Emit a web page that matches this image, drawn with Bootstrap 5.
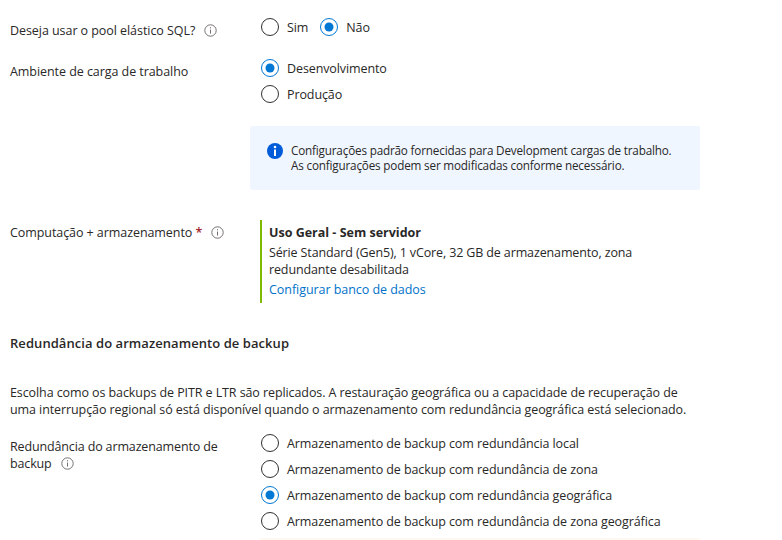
<!DOCTYPE html>
<html lang="pt-BR">
<head>
<meta charset="utf-8">
<meta name="viewport" content="width=device-width, initial-scale=1">
<title>Criar Banco de Dados SQL</title>
<link href="https://cdn.jsdelivr.net/npm/bootstrap@5.3.0/dist/css/bootstrap.min.css" rel="stylesheet">
<style>
body{font-family:"Open Sans","Noto Sans",sans-serif;font-size:12.5px;line-height:17px;letter-spacing:-.1px;color:#292827;background:#fff;overflow:hidden}
.form-page{width:782px;height:540px;padding-left:10px;overflow:hidden}
.form-page > *{flex-shrink:0}
.field-label{width:250px}
.field-row{white-space:nowrap}
.row-pool{padding-top:14px}
.row-pool .field-label{padding-top:6px;letter-spacing:-.06px}
.row-env{padding-top:15px}
.row-env .field-label{letter-spacing:-.06px}
.row-compute{padding-top:30px}
.row-compute .field-label{letter-spacing:-.07px}
.row-backup{padding-top:12px}
.row-backup .field-label{letter-spacing:-.14px}
.row-backup .opt{letter-spacing:-.09px}
.opt{height:26px;gap:7px;cursor:pointer}
.opt input{position:absolute;opacity:0;pointer-events:none}
.opt .dial{width:20px;height:20px;fill:none;stroke:#323130}
.opt .dial .dot{display:none;fill:#0078d4;stroke:none}
.opt input:checked + .dial{stroke:#0078d4}
.opt input:checked + .dial .dot{display:block}
.pool-yes{margin-right:11px}
.hint{width:13px;height:13px;stroke:#74726f;fill:none;flex:none;margin-left:9px}
.row-compute .hint{margin-top:2px;margin-left:9px}
.notice{width:450px;height:64px;margin-left:240px;margin-top:19px;padding:17px 0 0 17px;background:#f0f6ff;border-radius:2px;font-size:11.7px;line-height:15px;letter-spacing:-.17px;gap:8px;white-space:nowrap}
.notice svg{width:16px;height:16px;flex:none}
.tier{border-left:2px solid #7fba00;height:83px;padding:4px 0 0 7px}
.tier-name{letter-spacing:0}
.tier-text{margin-top:3px;letter-spacing:-.13px}
.req{color:#a4262c;font-weight:600}
.cfg{color:#0072c9;text-decoration:none;margin-top:3px;letter-spacing:-.05px}
.section-title{font-size:13px;line-height:18px;font-weight:600;letter-spacing:.06px;margin-top:31px}
.intro{margin-top:32px;letter-spacing:-.09px}
.warn-edge{width:440px;height:6px;margin-left:250px;background:#fff8f0;border-radius:2px}
</style>
<script src="https://cdn.jsdelivr.net/npm/bootstrap@5.3.0/dist/js/bootstrap.bundle.min.js"></script>
</head>
<body>
<svg class="d-none">
  <symbol id="info" viewBox="0 0 13 13"><circle cx="6.5" cy="6.5" r="5.7"/><path d="M6.5 5.6v4M6.5 3.2v1.2"/></symbol>
</svg>
<main class="form-page d-flex flex-column">
  <div class="field-row row-pool d-flex">
    <div class="field-label d-flex align-items-center"><span>Deseja usar o pool elástico SQL?</span><svg class="hint"><use href="#info"/></svg></div>
    <div class="d-flex">
      <label class="opt pool-yes d-flex align-items-center"><input type="radio" name="pool"><svg class="dial" viewBox="0 0 20 20"><circle cx="10" cy="10" r="8.5"/><circle class="dot" cx="10" cy="10" r="4.5"/></svg><span>Sim</span></label>
      <label class="opt d-flex align-items-center"><input type="radio" name="pool" checked><svg class="dial" viewBox="0 0 20 20"><circle cx="10" cy="10" r="8.5"/><circle class="dot" cx="10" cy="10" r="4.5"/></svg><span>Não</span></label>
    </div>
  </div>
  <div class="field-row row-env d-flex">
    <div class="field-label pt-2">Ambiente de carga de trabalho</div>
    <div>
      <label class="opt d-flex align-items-center"><input type="radio" name="env" checked><svg class="dial" viewBox="0 0 20 20"><circle cx="10" cy="10" r="8.5"/><circle class="dot" cx="10" cy="10" r="4.5"/></svg><span>Desenvolvimento</span></label>
      <label class="opt d-flex align-items-center"><input type="radio" name="env"><svg class="dial" viewBox="0 0 20 20"><circle cx="10" cy="10" r="8.5"/><circle class="dot" cx="10" cy="10" r="4.5"/></svg><span>Produção</span></label>
    </div>
  </div>
  <div class="notice d-flex">
    <svg viewBox="0 0 16 16"><circle cx="8" cy="8" r="8" fill="#015cda"/><circle cx="8" cy="4" r="1.3" fill="#fff"/><path d="M7 6.5h2V13H7z" fill="#fff"/></svg>
    <div><div>Configurações padrão fornecidas para Development cargas de trabalho.</div><div>As configurações podem ser modificadas conforme necessário.</div></div>
  </div>
  <div class="field-row row-compute d-flex">
    <div class="field-label d-flex align-items-start pt-1"><span>Computação + armazenamento <span class="req">*</span></span><svg class="hint"><use href="#info"/></svg></div>
    <div class="tier">
      <div class="tier-name fw-bold">Uso Geral - Sem servidor</div>
      <div class="tier-text">Série Standard (Gen5), 1 vCore, 32 GB de armazenamento, zona<br>redundante desabilitada</div>
      <a class="cfg d-block" href="#">Configurar banco de dados</a>
    </div>
  </div>
  <h2 class="section-title mb-0">Redundância do armazenamento de backup</h2>
  <p class="intro mb-0 text-nowrap">Escolha como os backups de PITR e LTR são replicados. A restauração geográfica ou a capacidade de recuperação de<br>uma interrupção regional só está disponível quando o armazenamento com redundância geográfica está selecionado.</p>
  <div class="field-row row-backup d-flex">
    <div class="field-label pt-2">Redundância do armazenamento de<br><span class="d-flex align-items-center">backup<svg class="hint"><use href="#info"/></svg></span></div>
    <div>
      <label class="opt d-flex align-items-center"><input type="radio" name="bk"><svg class="dial" viewBox="0 0 20 20"><circle cx="10" cy="10" r="8.5"/><circle class="dot" cx="10" cy="10" r="4.5"/></svg><span>Armazenamento de backup com redundância local</span></label>
      <label class="opt d-flex align-items-center"><input type="radio" name="bk"><svg class="dial" viewBox="0 0 20 20"><circle cx="10" cy="10" r="8.5"/><circle class="dot" cx="10" cy="10" r="4.5"/></svg><span>Armazenamento de backup com redundância de zona</span></label>
      <label class="opt d-flex align-items-center"><input type="radio" name="bk" checked><svg class="dial" viewBox="0 0 20 20"><circle cx="10" cy="10" r="8.5"/><circle class="dot" cx="10" cy="10" r="4.5"/></svg><span>Armazenamento de backup com redundância geográfica</span></label>
      <label class="opt d-flex align-items-center"><input type="radio" name="bk"><svg class="dial" viewBox="0 0 20 20"><circle cx="10" cy="10" r="8.5"/><circle class="dot" cx="10" cy="10" r="4.5"/></svg><span>Armazenamento de backup com redundância de zona geográfica</span></label>
    </div>
  </div>
  <div class="warn-edge mt-1"></div>
</main>
</body>
</html>
